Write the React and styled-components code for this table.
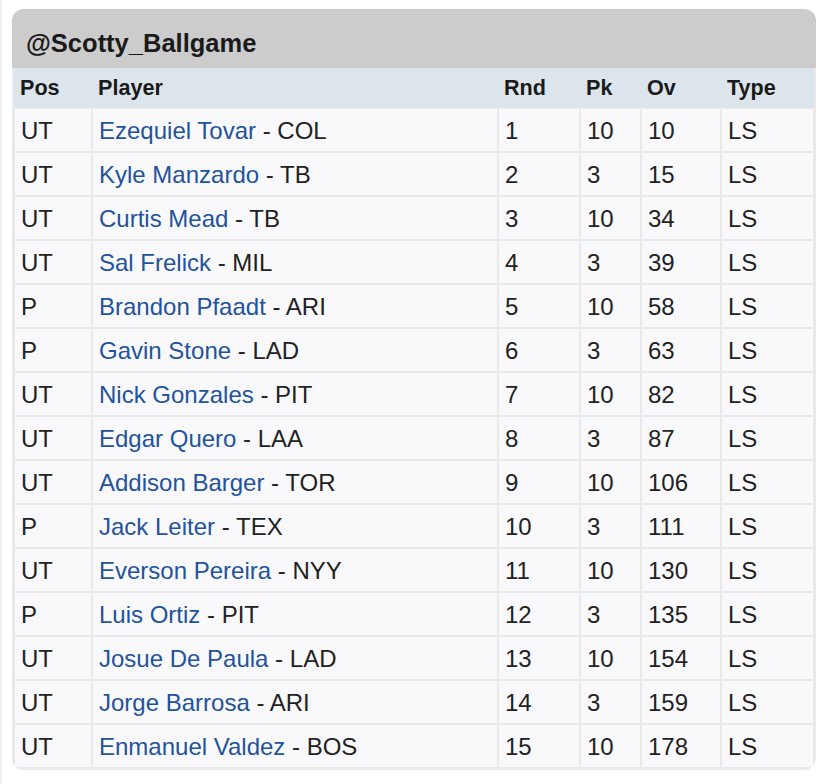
import React from 'react';
import styled, { createGlobalStyle } from 'styled-components';

const GlobalStyle = createGlobalStyle`
  html, body {
    margin: 0;
    padding: 0;
    background: #ffffff;
  }

  body {
    font-family: 'Liberation Sans', Arial, Helvetica, sans-serif;
    color: #222222;
  }
`;

const PageStyled = styled.div`
  min-height: 784px;
  box-sizing: border-box;
  padding: 9px 20px 0 10px;
  border-left: 2px solid #efefef;
`;

const CardStyled = styled.section`
  width: 804px;
  box-sizing: border-box;
  border-radius: 12px;
  overflow: hidden;
  background: #e9e9e9;
  padding: 0 1px 1px;
`;

const TitleStyled = styled.h2`
  margin: 0 -1px;
  height: 59px;
  box-sizing: border-box;
  display: flex;
  align-items: center;
  padding: 9px 14px 0;
  background: #cccccc;
  font-size: 25.5px;
  font-weight: 700;
  color: #1a1a1a;
`;

const TableStyled = styled.table`
  width: 100%;
  border-collapse: collapse;
  table-layout: fixed;
`;

const HeadCellStyled = styled.th`
  width: ${(p) => (p.$width ? `${p.$width}px` : 'auto')};
  height: 40px;
  padding: 0 6px;
  box-sizing: border-box;
  text-align: left;
  font-size: 21.6px;
  font-weight: 700;
  color: #1a1a1a;
  background: #dde5ec;
  border-bottom: 2px solid #e9e9e9;
`;

const CellStyled = styled.td`
  height: 44px;
  padding: 1px 6px 0;
  box-sizing: border-box;
  font-size: 24px;
  background: #f9f9fb;
  border: 2px solid #e9e9e9;
  white-space: nowrap;
`;

const PlayerLinkStyled = styled.a`
  color: #22539b;
  text-decoration: none;
`;

const COLUMNS = [
  { label: 'Pos', width: 78 },
  { label: 'Player', width: 406 },
  { label: 'Rnd', width: 82 },
  { label: 'Pk', width: 61 },
  { label: 'Ov', width: 80 },
  { label: 'Type' },
];

const PICKS = [
  ['UT', 'Ezequiel Tovar', 'COL', 1, 10, 10],
  ['UT', 'Kyle Manzardo', 'TB', 2, 3, 15],
  ['UT', 'Curtis Mead', 'TB', 3, 10, 34],
  ['UT', 'Sal Frelick', 'MIL', 4, 3, 39],
  ['P', 'Brandon Pfaadt', 'ARI', 5, 10, 58],
  ['P', 'Gavin Stone', 'LAD', 6, 3, 63],
  ['UT', 'Nick Gonzales', 'PIT', 7, 10, 82],
  ['UT', 'Edgar Quero', 'LAA', 8, 3, 87],
  ['UT', 'Addison Barger', 'TOR', 9, 10, 106],
  ['P', 'Jack Leiter', 'TEX', 10, 3, 111],
  ['UT', 'Everson Pereira', 'NYY', 11, 10, 130],
  ['P', 'Luis Ortiz', 'PIT', 12, 3, 135],
  ['UT', 'Josue De Paula', 'LAD', 13, 10, 154],
  ['UT', 'Jorge Barrosa', 'ARI', 14, 3, 159],
  ['UT', 'Enmanuel Valdez', 'BOS', 15, 10, 178],
];

const App = () => (
  <PageStyled>
    <GlobalStyle />
    <CardStyled>
      <TitleStyled>@Scotty_Ballgame</TitleStyled>
      <TableStyled>
        <thead>
          <tr>
            {COLUMNS.map((col) => (
              <HeadCellStyled key={col.label} $width={col.width}>
                {col.label}
              </HeadCellStyled>
            ))}
          </tr>
        </thead>
        <tbody>
          {PICKS.map(([pos, name, team, rnd, pk, ov]) => (
            <tr key={ov}>
              <CellStyled>{pos}</CellStyled>
              <CellStyled>
                <PlayerLinkStyled href="#">{name}</PlayerLinkStyled> - {team}
              </CellStyled>
              <CellStyled>{rnd}</CellStyled>
              <CellStyled>{pk}</CellStyled>
              <CellStyled>{ov}</CellStyled>
              <CellStyled>LS</CellStyled>
            </tr>
          ))}
        </tbody>
      </TableStyled>
    </CardStyled>
  </PageStyled>
);

export default App;
